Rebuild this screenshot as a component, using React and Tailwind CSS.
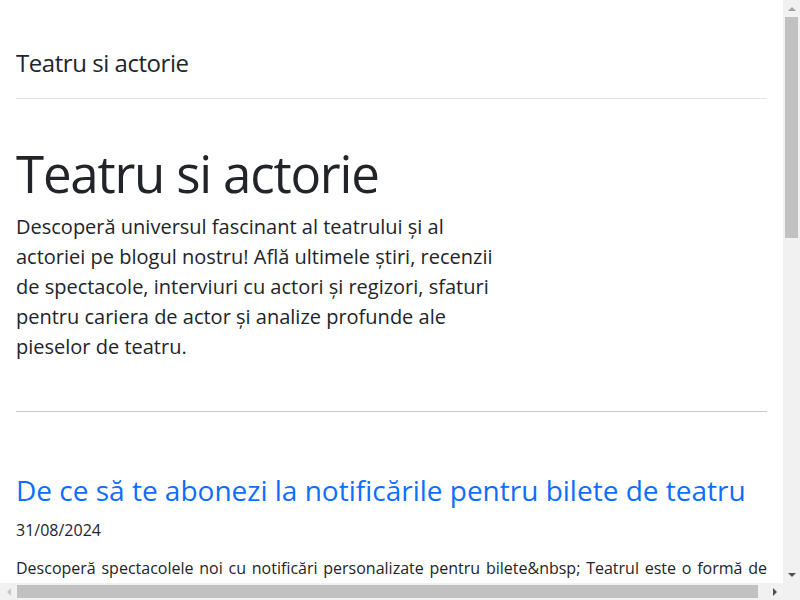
function Arrow({ dir, color }) {
  const pts = {
    up: "0,5 4,1 8,5",
    down: "0,1 4,5 8,1",
    left: "5,0 1,4 5,8",
    right: "1,0 5,4 1,8",
  }[dir];
  const vertical = dir === "up" || dir === "down";
  return (
    <svg width={vertical ? 8 : 6} height={vertical ? 6 : 8} viewBox={vertical ? "0 0 8 6" : "0 0 6 8"}>
      <polygon points={pts} fill={color} />
    </svg>
  );
}

function Article({ title, date, children }) {
  return (
    <article>
      <h2 className="text-[28px] leading-[1.2] text-[#0d6efd] mb-[10px]">{title}</h2>
      <p className="text-base leading-6 mb-[14px]">{date}</p>
      <p className="text-base leading-6 text-justify">{children}</p>
    </article>
  );
}

export default function App() {
  return (
    <div className="w-[800px] h-[600px] overflow-hidden grid grid-cols-[783px_17px] grid-rows-[583px_17px] bg-white font-['Open_Sans',sans-serif] text-[#212529]">
      <main className="overflow-hidden px-4">
        <header className="pt-[45px] pb-[17px] border-b border-[#dee2e6]">
          <span className="text-2xl leading-9 tracking-[-0.45px]">Teatru si actorie</span>
        </header>
        <section className="pt-[44px] pb-[49px]">
          <h1 className="text-[51px] leading-[1.2] tracking-[-1.2px] mb-2">Teatru si actorie</h1>
          <p className="text-xl leading-[30px] w-[500px]">
            Descoperă universul fascinant al teatrului și al actoriei pe blogul nostru! Află ultimele știri, recenzii de spectacole, interviuri cu actori și regizori, sfaturi pentru cariera de actor și analize profunde ale pieselor de teatru.
          </p>
        </section>
        <hr className="border-t border-[#c8c9ca]" />
        <div className="pt-[62px] flex flex-col gap-12">
          <Article title="De ce să te abonezi la notificările pentru bilete de teatru" date="31/08/2024">
            Descoperă spectacolele noi cu notificări personalizate pentru bilete&amp;nbsp; Teatrul este o formă de artă vie și dinamică, iar pentru a nu rata niciun spectacol important, abonarea la notificările pentru bilete este esențială.
          </Article>
          <Article title="Cum să te pregătești pentru o audiție de teatru" date="24/08/2024">
            Audițiile pot fi stresante, dar cu pregătirea potrivită îți poți demonstra talentul.
          </Article>
        </div>
      </main>
      <div className="bg-[#f1f1f1] flex flex-col">
        <div className="h-[17px] flex items-center justify-center">
          <Arrow dir="up" color="#a3a3a3" />
        </div>
        <div className="flex-1 px-[2px]">
          <div className="h-[221px] bg-[#c1c1c1]" />
        </div>
        <div className="h-[17px] flex items-center justify-center">
          <Arrow dir="down" color="#505050" />
        </div>
      </div>
      <div className="bg-[#f1f1f1] flex">
        <div className="w-[17px] flex items-center justify-center">
          <Arrow dir="left" color="#c8c8c8" />
        </div>
        <div className="flex-1 py-[2px]">
          <div className="w-[741px] h-full bg-[#c1c1c1]" />
        </div>
        <div className="w-[17px] flex items-center justify-center">
          <Arrow dir="right" color="#505050" />
        </div>
      </div>
      <div className="bg-[#f1f1f1]" />
    </div>
  );
}
